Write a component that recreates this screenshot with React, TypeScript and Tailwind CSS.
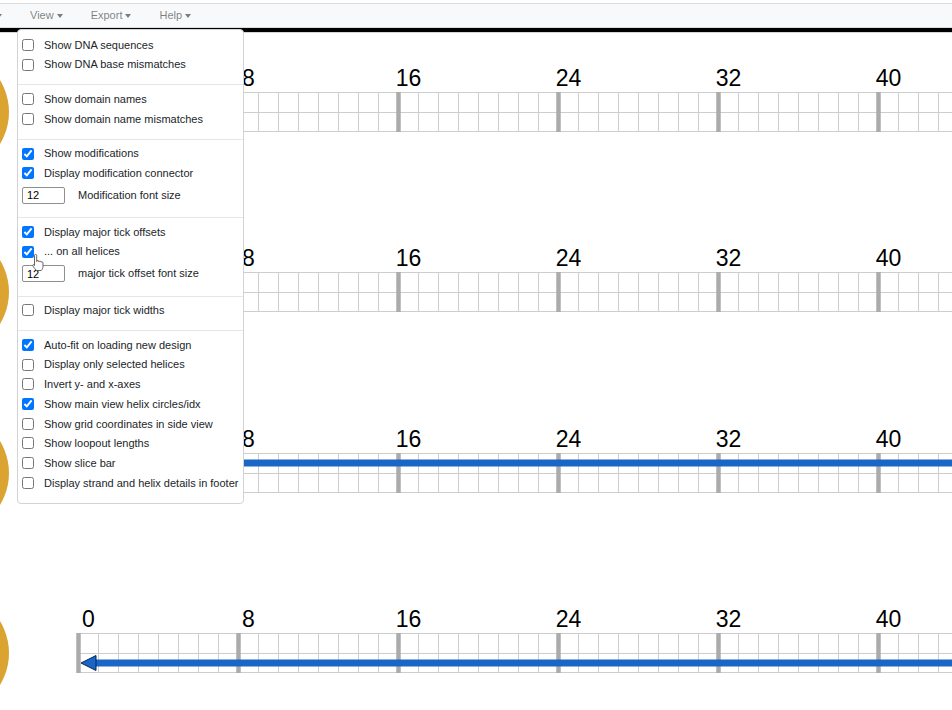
import React from "react";

type Item =
  | { kind: "check"; label: string; checked: boolean }
  | { kind: "input"; label: string; value: string };

const sections: Item[][] = [
  [
    { kind: "check", label: "Show DNA sequences", checked: false },
    { kind: "check", label: "Show DNA base mismatches", checked: false },
  ],
  [
    { kind: "check", label: "Show domain names", checked: false },
    { kind: "check", label: "Show domain name mismatches", checked: false },
  ],
  [
    { kind: "check", label: "Show modifications", checked: true },
    { kind: "check", label: "Display modification connector", checked: true },
    { kind: "input", label: "Modification font size", value: "12" },
  ],
  [
    { kind: "check", label: "Display major tick offsets", checked: true },
    { kind: "check", label: "... on all helices", checked: true },
    { kind: "input", label: "major tick offset font size", value: "12" },
  ],
  [{ kind: "check", label: "Display major tick widths", checked: false }],
  [
    { kind: "check", label: "Auto-fit on loading new design", checked: true },
    { kind: "check", label: "Display only selected helices", checked: false },
    { kind: "check", label: "Invert y- and x-axes", checked: false },
    { kind: "check", label: "Show main view helix circles/idx", checked: true },
    { kind: "check", label: "Show grid coordinates in side view", checked: false },
    { kind: "check", label: "Show loopout lengths", checked: false },
    { kind: "check", label: "Show slice bar", checked: false },
    { kind: "check", label: "Display strand and helix details in footer", checked: false },
  ],
];

const menus = ["View", "Export", "Help"];

const helixTops = [92, 272, 453, 633];
const STRAND = "#1966c8";

const Caret = ({ className = "" }: { className?: string }) => (
  <span className={`w-0 h-0 border-x-[3.5px] border-x-transparent border-t-[4px] border-t-black/50 ${className}`} />
);

const NavItem = ({ label }: { label: string }) => (
  <div className="flex items-center px-[14px] text-[11px] text-black/50">
    <span>{label}</span>
    <Caret className="ml-[3px]" />
  </div>
);

const Helix = ({ top, idx }: { top: number; idx: number }) => {
  const cols = Array.from({ length: 45 }, (_, i) => i);
  return (
    <g>
      <circle cx={-52} cy={top + 20} r={61} fill="#dba431" />
      {[top + 0.5, top + 20.5, top + 39.5].map(y => (
        <line key={y} x1={78} x2={960} y1={y} y2={y} stroke="#cdcdcd" strokeWidth={1} />
      ))}
      {cols
        .filter(i => i % 8 !== 0)
        .map(i => (
          <line key={i} x1={78.5 + 20 * i} x2={78.5 + 20 * i} y1={top} y2={top + 40} stroke="#cdcdcd" strokeWidth={1} />
        ))}
      {cols
        .filter(i => i % 8 === 0)
        .map(i => (
          <g key={i}>
            <line x1={78.5 + 20 * i} x2={78.5 + 20 * i} y1={top} y2={top + 40} stroke="#ababab" strokeWidth={4.5} />
            <text
              x={88.5 + 20 * i}
              y={top - 6}
              textAnchor="middle"
              fontSize={23}
              fontFamily="'Liberation Sans', Arial, sans-serif"
              fill="#000"
            >
              {i}
            </text>
          </g>
        ))}
      {idx === 2 && <line x1={88} x2={960} y1={top + 10} y2={top + 10} stroke={STRAND} strokeWidth={7} />}
      {idx === 3 && (
        <g>
          <line x1={95} x2={960} y1={top + 30} y2={top + 30} stroke={STRAND} strokeWidth={7} />
          <polygon
            points={`81,${top + 30} 96,${top + 22.5} 96,${top + 37.5}`}
            fill={STRAND}
            stroke="#0b2550"
            strokeWidth={1}
          />
        </g>
      )}
    </g>
  );
};

export default function App() {
  return (
    <div className="relative w-[952px] h-[710px] overflow-hidden bg-white font-['Liberation_Sans',Arial,sans-serif]">
      <div className="h-[3px]" />
      <nav className="h-[25px] border-y border-[#dcdcdc] bg-[#f8f9fa] flex items-center overflow-hidden">
        <Caret className="ml-[-4px] mr-[14px] shrink-0" />
        {menus.map(m => (
          <NavItem key={m} label={m} />
        ))}
      </nav>
      <div className="h-[4px] bg-black" />
      <div className="h-px bg-[#d4d4d4]" />

      <svg width={952} height={677} viewBox="0 33 952 677" className="block">
        {helixTops.map((t, i) => (
          <Helix key={t} top={t} idx={i} />
        ))}
      </svg>

      <div className="absolute left-[17px] top-[29px] w-[227px] bg-white border border-[#d3d3d3] rounded-[4px] pt-[5px] text-[11px] text-[#212529]">
        {sections.map((sec, si) => (
          <div
            key={si}
            className={
              si === sections.length - 1
                ? "pt-[4px] pb-[10px]"
                : si === 0
                ? "pb-[10px] border-b border-[#e6e6e6]"
                : "pt-[4px] pb-[10px] border-b border-[#e6e6e6]"
            }
          >
            {sec.map(item =>
              item.kind === "check" ? (
                <div key={item.label} className="h-[19.7px] flex items-center">
                  <input type="checkbox" defaultChecked={item.checked} className="ml-[4px] w-3 h-3" />
                  <span className="ml-[10px] whitespace-nowrap">{item.label}</span>
                </div>
              ) : (
                <div key={item.label} className="h-6 flex items-center">
                  <input
                    type="text"
                    defaultValue={item.value}
                    className="ml-[4px] w-[43px] h-[17px] border border-[#8f8f8f] rounded-[2px] pl-[4px] text-[11px] text-black"
                  />
                  <span className="ml-[13px] whitespace-nowrap">{item.label}</span>
                </div>
              )
            )}
          </div>
        ))}
      </div>

      <svg width={14} height={18} viewBox="0 0 14 18" className="absolute left-[31px] top-[254px]">
        <path
          d="M3.5 1.5 a1.1 1.1 0 0 1 2.2 0 V7.5 a1.1 1.1 0 0 1 2.2 0.3 a1.1 1.1 0 0 1 2.1 0.5 a1.1 1.1 0 0 1 2 0.6 V12 c0 2 -0.8 3.5 -1.8 4.5 H5.5 c-1 -1 -2.3 -2.6 -3.6 -4.4 c-0.7 -1 0.4 -1.9 1.3 -1.2 L3.5 11.5 Z"
          fill="#fff"
          stroke="#555"
          strokeWidth={0.9}
        />
      </svg>
    </div>
  );
}
